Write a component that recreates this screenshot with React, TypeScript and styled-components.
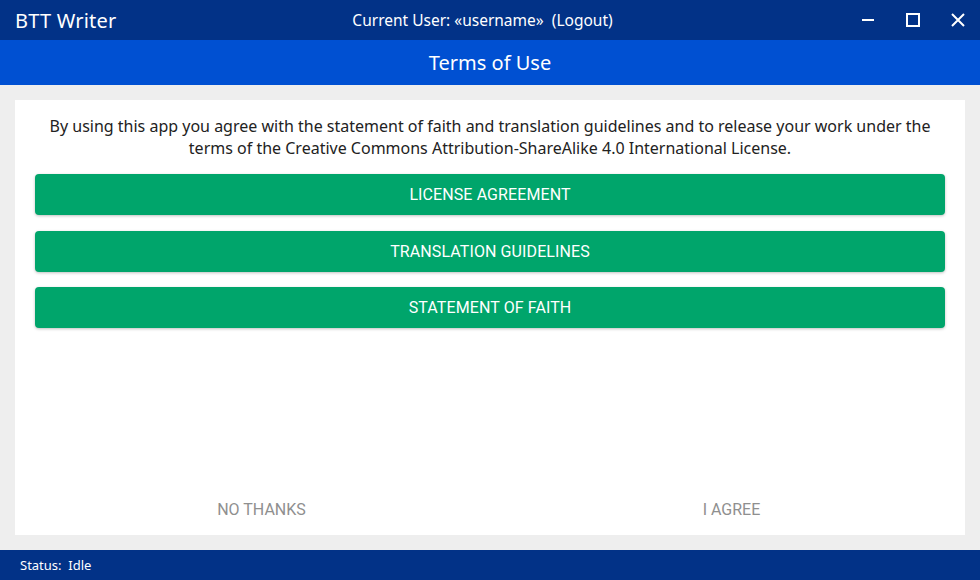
import React from "react";
import styled, { createGlobalStyle } from "styled-components";

const Global = createGlobalStyle`
  html, body { margin: 0; padding: 0; }
  body { font-family: "Noto Sans", sans-serif; background: #eeeeee; }
  #root { width: 980px; height: 580px; }
`;

const Shell = styled.div`
  width: 980px;
  height: 580px;
  display: flex;
  flex-direction: column;
  background: #eeeeee;
  overflow: hidden;
`;

const TitleBar = styled.div`
  height: 40px;
  background: #023287;
  color: #fff;
  display: grid;
  grid-template-columns: 135px 1fr 165px;
  align-items: center;
  padding: 0 0 0 15px;
`;

const AppName = styled.div`
  font-size: 20px;
  letter-spacing: 0.2px;
  white-space: nowrap;
`;

const UserInfo = styled.div`
  font-size: 15.5px;
  white-space: pre;
  text-align: center;
`;

const WindowControls = styled.div`
  display: flex;
  justify-content: flex-end;
  height: 100%;
`;

const WinButton = styled.div`
  width: 45px;
  height: 40px;
  display: flex;
  align-items: center;
  justify-content: center;
`;

const Header = styled.div`
  height: 45px;
  background: #0050d2;
  color: #fff;
  font-size: 20px;
  display: flex;
  align-items: center;
  justify-content: center;
`;

const Body = styled.div`
  flex: 1;
  padding: 15px;
  display: flex;
`;

const Card = styled.div`
  flex: 1;
  background: #fff;
  display: flex;
  flex-direction: column;
  padding: 15px 20px 12px;
`;

const Intro = styled.p`
  margin: 0 0 15px;
  font-size: 16px;
  line-height: 22px;
  text-align: center;
  color: #222;
`;

const ButtonList = styled.div`
  display: flex;
  flex-direction: column;
  gap: 15.5px;
`;

const GreenButton = styled.button`
  height: 41px;
  border: none;
  border-radius: 4px;
  background: #00a56b;
  color: #fff;
  font-family: Roboto, sans-serif;
  font-size: 16px;
  letter-spacing: 0.1px;
  box-shadow: 0 1px 3px rgba(0, 0, 0, 0.25);
  cursor: pointer;
`;

const Footer = styled.div`
  margin-top: auto;
  display: grid;
  grid-template-columns: 1fr 1fr;
`;

const TextButton = styled.button<{ $shift: number }>`
  border: none;
  background: transparent;
  color: #8f8f8f;
  font-family: Roboto, sans-serif;
  font-size: 16px;
  height: 28px;
  justify-self: center;
  transform: translateX(${(p) => p.$shift}px);
  cursor: pointer;
`;

const StatusBar = styled.div`
  height: 30px;
  background: #023287;
  color: #fff;
  font-size: 13px;
  display: flex;
  align-items: center;
  padding: 0 20px;
  white-space: pre;
`;

export default function App() {
  return (
    <Shell>
      <Global />
      <TitleBar>
        <AppName>BTT Writer</AppName>
        <UserInfo>Current User: «username»  (Logout)</UserInfo>
        <WindowControls>
          <WinButton>
            <svg width="14" height="14" viewBox="0 0 14 14">
              <rect x="1" y="6" width="12" height="2" fill="#fff" />
            </svg>
          </WinButton>
          <WinButton>
            <svg width="14" height="14" viewBox="0 0 14 14">
              <rect x="1" y="1" width="12" height="12" fill="none" stroke="#fff" strokeWidth="2" />
            </svg>
          </WinButton>
          <WinButton>
            <svg width="14" height="14" viewBox="0 0 14 14">
              <path d="M1 1 L13 13 M13 1 L1 13" stroke="#fff" strokeWidth="2" />
            </svg>
          </WinButton>
        </WindowControls>
      </TitleBar>
      <Header>Terms of Use</Header>
      <Body>
        <Card>
          <Intro>
            By using this app you agree with the statement of faith and translation guidelines and to release your work under the terms of the Creative Commons Attribution-ShareAlike 4.0 International License.
          </Intro>
          <ButtonList>
            <GreenButton>LICENSE AGREEMENT</GreenButton>
            <GreenButton>TRANSLATION GUIDELINES</GreenButton>
            <GreenButton>STATEMENT OF FAITH</GreenButton>
          </ButtonList>
          <Footer>
            <TextButton $shift={-1}>NO THANKS</TextButton>
            <TextButton $shift={14}>I AGREE</TextButton>
          </Footer>
        </Card>
      </Body>
      <StatusBar>Status:  Idle</StatusBar>
    </Shell>
  );
}
